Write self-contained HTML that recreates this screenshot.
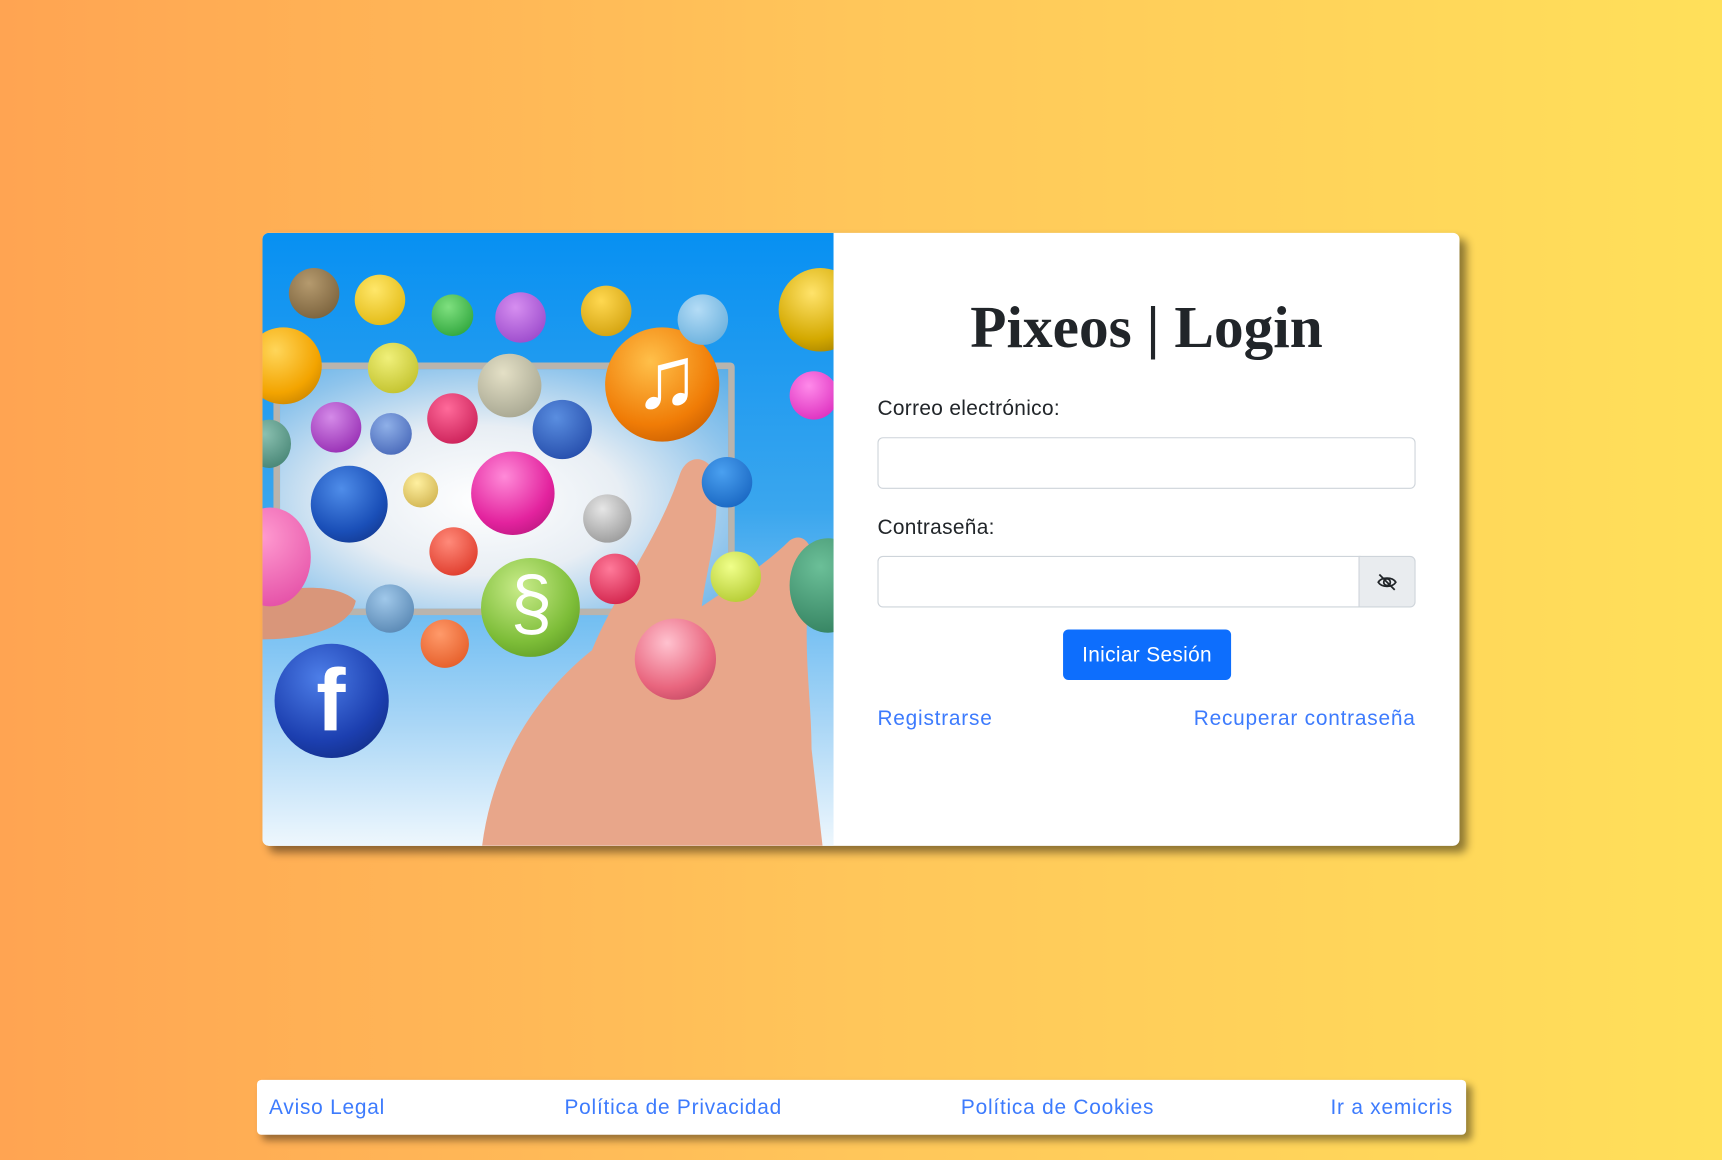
<!DOCTYPE html>
<html><head><meta charset="utf-8"><style>
html,body{margin:0;padding:0;width:1722px;height:1160px;overflow:hidden}
body{background:linear-gradient(90deg,#ffa452 0%,#ffc65a 50%,#ffe05a 100%);font-family:"Liberation Sans",sans-serif}
#w{position:absolute;left:0;top:0;width:1568px;height:1056px;transform:scale(1.0982,1.0985);transform-origin:0 0}
.card{position:absolute;left:239px;top:212px;width:1090px;height:558px;border-radius:6px;box-shadow:6px 6px 8px rgba(0,0,0,.45);background:#fff;overflow:hidden}
.img{position:absolute;left:0;top:0;width:520px;height:558px;background:linear-gradient(180deg,#0790f2 0%,#3aa6ee 45%,#a9d6f6 80%,#eef7fd 100%);overflow:hidden}
.c{position:absolute;border-radius:50%}
.form{position:absolute;left:520px;top:0;width:570px;height:558px}
h1{position:absolute;left:0;width:570px;top:55px;margin:0;text-align:center;font-family:"Liberation Serif",serif;font-weight:bold;font-size:54px;color:#212529}
.lbl{position:absolute;left:40px;font-size:19px;color:#212529;letter-spacing:.3px}
.inp{position:absolute;left:40px;width:488px;height:45px;border:1px solid #ced4da;border-radius:5px;background:#fff}
.btn{position:absolute;left:209px;top:361px;width:153px;height:46px;background:#0d6efd;color:#fff;border-radius:5px;font-size:19px;text-align:center;line-height:47px;letter-spacing:.3px}
a{color:#3d7bfd;text-decoration:none;position:absolute;font-size:19px;letter-spacing:.7px}
.foot{position:absolute;left:234px;top:983px;width:1101px;height:50px;background:#fff;border-radius:4px;box-shadow:5px 5px 7px rgba(0,0,0,.4)}
.foot a{top:15px}
</style></head><body><div id="w">
<div class="card">
 <div class="img">
  <div style="position:absolute;left:10px;top:118px;width:408px;height:218px;border:6px solid #b9b4ad;background:radial-gradient(ellipse at 45% 55%,#fff 0%,#e8eef4 40%,#8ec4ec 75%,#5aaee8 100%);border-radius:4px"></div>
  <svg style="position:absolute;left:0;top:0" width="520" height="558"><path d="M200 558 C210 480 250 420 300 380 C320 330 360 280 380 220 C385 205 400 200 410 215 C420 260 405 300 400 340 C430 320 460 300 480 280 C495 270 505 290 500 310 C490 370 500 420 500 470 L510 558 Z" fill="#e8a68a"/><path d="M0 330 C30 320 70 320 85 335 C80 360 40 370 0 370 Z" fill="#d9967a"/></svg>
  <div class="c" style="left:11px;top:374px;width:104px;height:104px;background:radial-gradient(circle at 40% 30%,#4d7ee8,#1c3fb0 60%,#0d2470)"><span style="position:absolute;left:38px;top:6px;color:#fff;font-size:80px;font-weight:bold">f</span></div>
  <div class="c" style="left:312px;top:86px;width:104px;height:104px;background:radial-gradient(circle at 40% 30%,#ffc04a,#f07c06 60%,#b34e00)"><span style="position:absolute;left:26px;top:0;color:#fff;font-size:80px">♫</span></div>
  <div class="c" style="left:199px;top:296px;width:90px;height:90px;background:radial-gradient(circle at 40% 30%,#c9ec8a,#7dbd38 60%,#4e8a1c)"><span style="position:absolute;left:27px;top:2px;color:#fff;font-size:68px">§</span></div>
  <div class="c" style="left:190px;top:199px;width:76px;height:76px;background:radial-gradient(circle at 40% 30%,#ff8ad8,#e3239e 60%,#a5106e)"></div>
  <div class="c" style="left:44px;top:212px;width:70px;height:70px;background:radial-gradient(circle at 40% 30%,#4f8de9,#1a4fb8 60%,#0f2c7a)"></div>
  <div class="c" style="left:339px;top:351px;width:74px;height:74px;background:radial-gradient(circle at 40% 30%,#ffc2cf,#e9657e 60%,#b13a55)"></div>
  <div class="c" style="left:470px;top:32px;width:76px;height:76px;background:radial-gradient(circle at 40% 30%,#ffe36b,#d4a900 60%,#8a6a00)"></div>
  <div class="c" style="left:-16px;top:86px;width:70px;height:70px;background:radial-gradient(circle at 40% 30%,#ffd65a,#f3a400 60%,#b07000)"></div>
  <div class="c" style="left:-30px;top:250px;width:74px;height:90px;background:radial-gradient(circle at 40% 30%,#ff9ad0,#e044a0)"></div>
  <div class="c" style="left:480px;top:278px;width:70px;height:86px;background:radial-gradient(circle at 40% 30%,#6bbf98,#2d7a59)"></div>
  <div class="c" style="left:24px;top:32px;width:46px;height:46px;background:radial-gradient(circle at 40% 30%,#b59a6e,#6e5632)"></div>
  <div class="c" style="left:84px;top:38px;width:46px;height:46px;background:radial-gradient(circle at 40% 30%,#ffe76a,#dcb000)"></div>
  <div class="c" style="left:154px;top:56px;width:38px;height:38px;background:radial-gradient(circle at 40% 30%,#7fe07f,#1f9a2f)"></div>
  <div class="c" style="left:212px;top:54px;width:46px;height:46px;background:radial-gradient(circle at 40% 30%,#d68ef0,#8f3cc4)"></div>
  <div class="c" style="left:290px;top:48px;width:46px;height:46px;background:radial-gradient(circle at 40% 30%,#ffd850,#c99600)"></div>
  <div class="c" style="left:378px;top:56px;width:46px;height:46px;background:radial-gradient(circle at 40% 30%,#b4dcf6,#5aa7d8)"></div>
  <div class="c" style="left:96px;top:100px;width:46px;height:46px;background:radial-gradient(circle at 40% 30%,#f0f07a,#b8b81c)"></div>
  <div class="c" style="left:196px;top:110px;width:58px;height:58px;background:radial-gradient(circle at 40% 30%,#e4e0c6,#9a9a86)"></div>
  <div class="c" style="left:480px;top:126px;width:44px;height:44px;background:radial-gradient(circle at 40% 30%,#ff8aea,#d61cb6)"></div>
  <div class="c" style="left:44px;top:154px;width:46px;height:46px;background:radial-gradient(circle at 40% 30%,#d48ae8,#8a1aa8)"></div>
  <div class="c" style="left:150px;top:146px;width:46px;height:46px;background:radial-gradient(circle at 40% 30%,#ff6a9a,#c0104a)"></div>
  <div class="c" style="left:246px;top:152px;width:54px;height:54px;background:radial-gradient(circle at 40% 30%,#5a8ee0,#1a3fa0)"></div>
  <div class="c" style="left:98px;top:164px;width:38px;height:38px;background:radial-gradient(circle at 40% 30%,#8fb0e8,#3a5ab0)"></div>
  <div class="c" style="left:400px;top:204px;width:46px;height:46px;background:radial-gradient(circle at 40% 30%,#4aa0f0,#0e5ab8)"></div>
  <div class="c" style="left:292px;top:238px;width:44px;height:44px;background:radial-gradient(circle at 40% 30%,#e6e6e6,#8a8a8a)"></div>
  <div class="c" style="left:152px;top:268px;width:44px;height:44px;background:radial-gradient(circle at 40% 30%,#ff8a7a,#d82a1a)"></div>
  <div class="c" style="left:298px;top:292px;width:46px;height:46px;background:radial-gradient(circle at 40% 30%,#ff7a9a,#c8103a)"></div>
  <div class="c" style="left:408px;top:290px;width:46px;height:46px;background:radial-gradient(circle at 40% 30%,#f0ff8a,#a8c020)"></div>
  <div class="c" style="left:94px;top:320px;width:44px;height:44px;background:radial-gradient(circle at 40% 30%,#a0c8ea,#4a7aa8)"></div>
  <div class="c" style="left:144px;top:352px;width:44px;height:44px;background:radial-gradient(circle at 40% 30%,#ff9a6a,#e0501a)"></div>
  <div class="c" style="left:128px;top:218px;width:32px;height:32px;background:radial-gradient(circle at 40% 30%,#fff0a0,#c8a840)"></div>
  <div class="c" style="left:-14px;top:170px;width:40px;height:44px;background:radial-gradient(circle at 40% 30%,#8ac0b0,#3a7a6a)"></div>
 </div>
 <div class="form">
  <h1>Pixeos | Login</h1>
  <div class="lbl" style="top:150px">Correo electrónico:</div>
  <div class="inp" style="top:186px"></div>
  <div class="lbl" style="top:258px">Contraseña:</div>
  <div class="inp" style="top:294px;width:438px;border-radius:5px 0 0 5px"></div>
  <div style="position:absolute;left:478px;top:294px;width:50px;height:45px;border:1px solid #ced4da;border-radius:0 5px 5px 0;background:#e9ecef">
   <svg style="position:absolute;left:15px;top:13px" width="20" height="20" viewBox="0 0 20 20"><path d="M2 10 C5 5 15 5 18 10 C15 15 5 15 2 10Z" fill="none" stroke="#212529" stroke-width="1.6"/><circle cx="10" cy="10" r="3" fill="none" stroke="#212529" stroke-width="1.6"/><path d="M3 3 L17 17" stroke="#212529" stroke-width="1.6"/></svg>
  </div>
  <div class="btn">Iniciar Sesión</div>
  <a style="left:40px;top:432px">Registrarse</a>
  <a style="right:40px;top:432px">Recuperar contraseña</a>
 </div>
</div>
<div class="foot">
 <a style="left:11px">Aviso Legal</a>
 <a style="left:280px">Política de Privacidad</a>
 <a style="left:641px">Política de Cookies</a>
 <a style="right:12px">Ir a xemicris</a>
</div>
</div></body></html>
